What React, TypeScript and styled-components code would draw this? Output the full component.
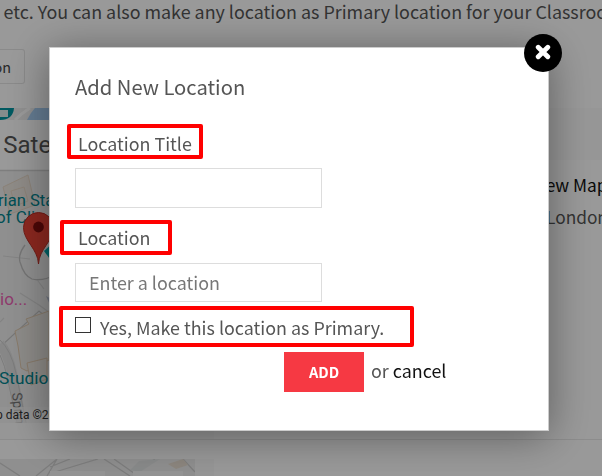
import React from "react";
import styled, { createGlobalStyle } from "styled-components";

const GlobalStyle = createGlobalStyle`
  * { box-sizing: border-box; }
  html, body { margin: 0; padding: 0; overflow: hidden; }
  body {
    font-family: "Source Sans Pro", "Noto Sans CJK SC", "Noto Sans", sans-serif;
    color: #555;
    background: #fff;
  }
`;

const Page = styled.main`
  width: 602px;
  height: 476px;
  overflow: hidden;
  display: flex;
  flex-direction: column;
  align-items: flex-start;
`;

const Intro = styled.p`
  margin: 0 0 0 3.5px;
  height: 49px;
  font-size: 17.9px;
  line-height: 23px;
  white-space: nowrap;
`;

const PageButton = styled.button`
  width: 25px;
  height: 35px;
  margin: 0 0 24px;
  padding: 0 13px 0 0;
  display: flex;
  align-items: center;
  justify-content: flex-end;
  overflow: hidden;
  border: 1px solid #e6e6e6;
  border-left: 0;
  border-radius: 0 3px 3px 0;
  background: #fff;
  color: #444;
  font: 14.4px "Noto Sans CJK SC", sans-serif;
`;

const LocationCard = styled.section`
  width: 602px;
  height: 332px;
  flex: none;
  display: grid;
  grid-template-columns: 214px 1fr;
  border-bottom: 1px solid #e9e9e9;
  background: #fbfbfb;
`;

const MapSvg = styled.svg`
  display: block;
`;

const Details = styled.div`
  margin-top: 52px;
  padding: 9px 0 0 316px;
  background: #fff;
  white-space: nowrap;
  font-size: 17.3px;
  line-height: 32px;
`;

const DetailLine = styled.div<{ $strong?: boolean }>`
  margin-left: ${(p) => (p.$strong ? 1 : 16)}px;
  color: ${(p) => (p.$strong ? "#111" : "#555")};
`;

const NextCard = styled.section`
  width: 214px;
  height: 17px;
  margin-top: 19px;
  flex: none;
  background: #fafafa;
`;

const Overlay = styled.div`
  position: fixed;
  inset: 0;
  padding: 47px 0 0 49px;
  background: rgba(0, 0, 0, 0.4);
`;

const Dialog = styled.div`
  position: relative;
  width: 500px;
  height: 384px;
  padding: 24px 25px 0 17px;
  display: flex;
  flex-direction: column;
  align-items: flex-start;
  border: 1px solid #ccc;
  background: #fff;
  box-shadow: 0 5px 40px rgba(0, 0, 0, 0.4);
`;

const Close = styled.button`
  position: absolute;
  top: -14px;
  right: -14px;
  width: 38px;
  height: 38px;
  padding: 0 1px 2px 0;
  display: grid;
  place-items: center;
  border: 0;
  border-radius: 50%;
  background: #000;
`;

const Title = styled.h2`
  margin: 0 0 22px 8px;
  font-size: 20.2px;
  line-height: 30px;
  font-weight: 400;
`;

const Highlight = styled.div<{ $width: number; $left: number; $pad: number; $height?: number; $drop?: number; $lift?: number }>`
  width: ${(p) => p.$width}px;
  height: ${(p) => p.$height ?? 35}px;
  margin-left: ${(p) => p.$left}px;
  padding: ${(p) => p.$drop ?? 0}px 0 ${(p) => p.$lift ?? 0}px ${(p) => p.$pad}px;
  display: flex;
  align-items: center;
  flex: none;
  border: 4px solid #f00;
  border-radius: 2px;
  font-size: 17.9px;
  line-height: 24px;
  white-space: nowrap;
`;

const Field = styled.input<{ $height: number; $top: number; $bottom: number }>`
  width: 247px;
  height: ${(p) => p.$height}px;
  margin: ${(p) => p.$top}px 0 ${(p) => p.$bottom}px 8px;
  padding: 0 13px 2px;
  flex: none;
  border: 1px solid #ddd;
  border-radius: 0;
  background: #fff;
  font: 17.9px "Noto Sans CJK SC", sans-serif;
  &::placeholder { color: #777; opacity: 1; }
`;

const CheckBox = styled.input`
  appearance: none;
  width: 16px;
  height: 16px;
  margin: 0 9px 3px 0;
  border: 1px solid #333;
  background: #fff;
`;

const Actions = styled.div`
  height: 40px;
  margin: 5px 0 0 217px;
  display: flex;
  align-items: center;
  font-size: 17.9px;
  white-space: nowrap;
`;

const AddButton = styled.button`
  width: 80px;
  height: 40px;
  margin-right: 7px;
  padding: 0 0 1px;
  border: 0;
  background: #f63943;
  color: #fff;
  font: bold 14.6px "Noto Sans CJK SC", sans-serif;
`;

const CancelHint = styled.span`
  padding-bottom: 4px;
`;

const Cancel = styled.a`
  color: #111;
`;

function StreetMap() {
  return (
    <MapSvg width="214" height="315" viewBox="0 0 214 315" fontFamily="Roboto, sans-serif">
      <rect width="214" height="315" fill="#efefef" />
      <path d="M0 0H14Q13 12 0 12Z" fill="#0094a0" />
      <path d="M0 2H8V9H0Z" fill="#dce9ea" />
      <path d="M27 12L31 5L35 0H60V12Z" fill="#a8cff4" />
      <path d="M15 12Q22 5 30 0" fill="none" stroke="#fff" strokeWidth="3" />
      <rect y="12" width="190" height="50" fill="#fff" />
      <path d="M0 62.5H190" stroke="#d2d2d2" strokeWidth="1.5" />
      <text x="3.3" y="45" fontSize="24" fill="#565656">Satellite</text>
      <g fill="#ede7e0" stroke="#e7d8c7" strokeWidth="1">
        <path d="M3 79L28 67L35 97L10 106Z" />
        <path d="M11 83L24 79L28 93L15 98Z" />
      </g>
      <path d="M3 148L30 151M0 214L4 210M20 185L39 197L60 212M38 173L44 181" fill="none" stroke="#dadada" strokeWidth="1.2" />
      <path d="M25 137Q18 146 20 154Q24 168 32 171Q42 174 60 165" fill="none" stroke="#c3c3c3" strokeWidth="1.3" />
      <path d="M44 143L55 133V158Z" fill="#00a6ad" />
      <text x="-2" y="98" fontSize="16.6" fill="#008590">rian Statue</text>
      <text x="-4" y="115" fontSize="17" fill="#008590">of Clio</text>
      <path d="M38.5 156C38 141 23.5 133 23.5 119.5A15 15 0 0 1 53.5 119.5C53.5 133 39 141 38.5 156Z" fill="#ea4335" stroke="#bd3026" />
      <circle cx="38.5" cy="119" r="5.4" fill="#7f0d0c" />
      <text x="0" y="197" fontSize="17" fill="#ed61b4">io...</text>
      <path d="M46 188L55 193L50 197Z" fill="#b7bfd3" />
      <path d="M0 239L39 203L58 219" fill="none" stroke="#c6c6c6" strokeWidth="1.2" />
      <path d="M0 236Q8 244 13 269L22 316" fill="none" stroke="#e1e1e1" strokeWidth="10" />
      <path d="M0 232Q11 242 16 265L26 315M0 247Q5 257 8 273L17 315" fill="none" stroke="#cecece" strokeWidth="1" />
      <path d="M15 223L29 216L26 211L49 203V252L27 263L21 260L18 238Z" fill="#ebe8e3" stroke="#e2cbb0" />
      <path d="M27 255L47 250V271L31 277Z" fill="#eee9e2" stroke="#e2cbb0" />
      <text x="-1" y="276" fontSize="17.3" fill="#008590">Studio</text>
      <text transform="translate(12 285) rotate(84)" fontSize="14" fill="#777">Spring</text>
      <rect y="299" width="190" height="16" fill="#f5f5f5" opacity=".7" />
      <text x="-4" y="311" fontSize="12" fill="#333">p data ©2020 Google</text>
    </MapSvg>
  );
}

function NextMap() {
  return (
    <MapSvg width="195" height="17" viewBox="0 0 195 17">
      <rect width="195" height="17" fill="#eeeeee" />
      <path d="M0 4L20 17M36 17L57 0L47 17M50 8L70 0M55 13L98 0M104 0L130 17M114 0L138 17M137 13L155 0M183 0L195 13" fill="none" stroke="#d0d0d0" strokeWidth="1.3" />
      <path d="M130 11L139 2L160 0L140 13Z" fill="#e3e6e6" />
      <path d="M168 5L183 0L188 6L176 10Z" fill="#e9dfd2" />
      <path d="M50 12H105V17H50ZM133 12H183V17H133Z" fill="#f6f6f6" />
    </MapSvg>
  );
}

export default function App() {
  return (
    <>
      <GlobalStyle />
      <Page>
        <Intro>etc. You can also make any location as Primary location for your Classroom</Intro>
        <PageButton>on</PageButton>
        <LocationCard>
          <StreetMap />
          <Details>
            <DetailLine $strong>View Map</DetailLine>
            <DetailLine>London</DetailLine>
          </Details>
        </LocationCard>
        <NextCard><NextMap /></NextCard>
      </Page>
      <Overlay>
        <Dialog role="dialog">
          <Close aria-label="Close">
            <svg width="16" height="16" viewBox="0 0 16 16">
              <path d="M3.2 3.2L12.8 12.8M12.8 3.2L3.2 12.8" stroke="#fff" strokeWidth="4.8" strokeLinecap="round" />
            </svg>
          </Close>
          <Title>Add New Location</Title>
          <Highlight as="label" $width={136} $left={0} $pad={7} $drop={2}>Location Title</Highlight>
          <Field $height={40} $top={9} $bottom={12} />
          <Highlight as="label" $width={112} $left={-7} $pad={14} $lift={2}>Location</Highlight>
          <Field $height={39} $top={8} $bottom={4} placeholder="Enter a location" />
          <Highlight as="label" $width={355} $height={41} $left={-8} $pad={12}>
            <CheckBox type="checkbox" />
            Yes, Make this location as Primary.
          </Highlight>
          <Actions>
            <AddButton>ADD</AddButton>
            <CancelHint>or <Cancel>cancel</Cancel></CancelHint>
          </Actions>
        </Dialog>
      </Overlay>
    </>
  );
}
